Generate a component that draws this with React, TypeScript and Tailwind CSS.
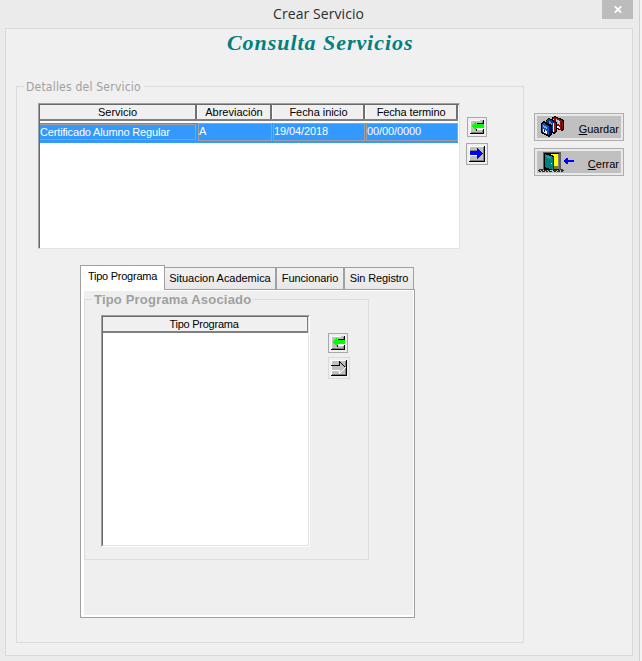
import React from "react";

type ArrowProps = { kind: "add" | "go" | "off" };

function ArrowIcon({ kind }: ArrowProps) {
  if (kind === "add") {
    return (
      <svg width="16" height="16" viewBox="0 0 16 16" shapeRendering="crispEdges">
        <path d="M1 1h13v13h-13z" fill="#c0c0c0" />
        <path d="M1 1h10v1h-10zM1 1h1v13h-1z" fill="#fff" />
        <path d="M8 4h7v6h-7z" fill="#efefef" />
        <path d="M14 1h1v3h-1zM8 4h7v1h-7zM14 10h1v5h-1zM1 14h14v1h-14zM7 10h1v2h-1z" fill="#000" />
        <path d="M2 13h12v1h-12zM13 2h1v2h-1zM13 11h1v2h-1z" fill="#808080" />
        <path d="M8 10h6v1h-6z" fill="#fff" />
        <path d="M2 7h1v-1h1v-1h1v-1h1v-1h1v2h8v4h-8v2h-1v-1h-1v-1h-1v-1h-1v-1h-1z" fill="#00ff00" />
      </svg>
    );
  }
  return (
    <svg width="16" height="16" viewBox="0 0 16 16" shapeRendering="crispEdges">
      <path d="M0 0h16v16h-16z" fill="#c0c0c0" />
      <path d="M0 0h15v1h-15zM0 0h1v15h-1z" fill="#fff" />
      <path d="M14 1h1v14h-1zM1 14h14v1h-14z" fill="#808080" />
      <path d="M15 0h1v16h-1zM0 15h16v1h-16z" fill="#000" />
      {kind === "go" ? (
        <>
          <path d="M1 4h7v1h-7z" fill="#808080" />
          <path
            d="M1 5h7v-3h1v1h1v1h1v1h1v1h1v1h1v1h-1v1h-1v1h-1v1h-1v1h-1v1h-1v-4h-7z"
            fill="#0000ff"
          />
          <path d="M1 9h7v1h-7z" fill="#fff" />
        </>
      ) : (
        <>
          <path d="M0 5h8v1h-8z" fill="#000" />
          <path
            d="M8 1h1v5h-1zM9 2h1v1h-1zM10 3h1v1h-1zM11 4h1v1h-1zM12 5h1v1h-1zM13 6h1v1h-1z"
            fill="#000"
          />
          <path
            d="M0 10h8v1h-8zM8 10h1v4h-1zM9 12h1v1h-1zM10 11h1v1h-1zM11 10h1v1h-1zM12 9h1v1h-1zM13 8h1v1h-1zM14 7h1v1h-1z"
            fill="#fff"
          />
        </>
      )}
    </svg>
  );
}

function DisksIcon() {
  return (
    <svg width="28" height="22" viewBox="0 0 28 22" shapeRendering="crispEdges">
      {/* back disk, dark red */}
      <path d="M15 1L18 0L27 4V13L25 15L15 11z" fill="#000" />
      <path d="M16 2L18 1L26 5V12L24 14L16 10z" fill="#8c1010" />
      <path d="M19 3L23 5V9L19 7z" fill="#c0c0c0" />
      <path d="M19 9L23 11V13L19 11z" fill="#fff" />
      <path d="M16 3h1v8h-1z" fill="#d0d0d0" />
      <path d="M24 6h1v7h-1z" fill="#400000" />
      {/* middle disk, blue with a dark red edge */}
      <path d="M9 4L12 2L20 6V15L17 18L9 14z" fill="#000" />
      <path d="M10 4L12 3L19 7V14L17 16L10 13z" fill="#103c90" />
      <path d="M12 5L15 7V10L12 8z" fill="#6090d8" />
      <path d="M9 5h1v6h-1z" fill="#a01818" />
      <path d="M16 7h1v9h-1z" fill="#e8e8e8" />
      <path d="M17 7h1v8h-1z" fill="#a01818" />
      {/* front disk, blue */}
      <path d="M4 7L7 5L15 9V18L12 21L4 17z" fill="#000" />
      <path d="M5 8L7 7L12 10V19L5 16z" fill="#1850a8" />
      <path d="M6 9L10 11V13L6 11z" fill="#70a8e8" />
      <path d="M6 13L10 15V18L6 16z" fill="#fff" />
      <path d="M7 14h1v2h-1z" fill="#000080" />
      <path d="M12 11L14 9V17L12 19z" fill="#001858" />
    </svg>
  );
}

function DoorIcon() {
  return (
    <svg width="38" height="22" viewBox="0 0 38 22" shapeRendering="crispEdges">
      <path d="M6 1h18v18h-18z" fill="#606060" />
      <path d="M7 2h15v17h-15z" fill="#000" />
      <path d="M14 3h7v12h-7z" fill="#ffff00" />
      <path d="M16 15h5v3h-5z" fill="#808000" />
      <path d="M21 3h1v15h-1z" fill="#808080" />
      <path d="M8 2L17 5V20L8 17z" fill="#000" />
      <path d="M8 3L16 6V19L8 16z" fill="#008080" />
      <path d="M9 4L14 6V8L9 6z" fill="#20a8a8" />
      <path d="M14 12h1v1h-1z" fill="#fff" />
      <path d="M16 6h1v13h-1z" fill="#004040" />
      <path
        d="M1 19h2v1h-2zM4 19h2v1h-2zM7 19h3v1h-3zM11 19h2v1h-2zM17 19h3v1h-3zM21 19h2v1h-2zM24 19h3v1h-3zM2 20h2v1h-2zM5 20h3v1h-3zM9 20h2v1h-2zM12 20h3v1h-3zM17 20h2v1h-2zM20 20h3v1h-3zM24 20h2v1h-2zM2 18h4v1h-4zM23 18h3v1h-3z"
        fill="#303030"
      />
      <path d="M26 10h1v-1h1v-1h1v-1h2v2h6v2h-6v2h-2v-1h-1v-1h-1v-1h-1z" fill="#0000ff" />
    </svg>
  );
}

function SmallButton({ kind }: ArrowProps) {
  if (kind === "add")
    return (
      <button className="flex h-5 w-5 items-center justify-center border border-[#a8a8a8] bg-[#efefef]">
        <ArrowIcon kind="add" />
      </button>
    );
  return (
    <button
      className={
        kind === "go"
          ? "flex h-[22px] w-[22px] items-center justify-center border border-[#a8a8a8] bg-[#efefef]"
          : "flex h-[22px] w-[22px] items-center justify-center border border-[#dadada] bg-[#efefef]"
      }
    >
      <ArrowIcon kind={kind} />
    </button>
  );
}

function ActionButton({ icon, letter, rest }: { icon: React.ReactNode; letter: string; rest: string }) {
  return (
    <button className="flex h-7 w-[90px] border border-[#adadad] bg-[#e9e9e9] p-0.5">
      <span className="flex h-[22px] w-full items-center justify-between bg-[#c0c0c0] pr-[2px]">
        <span className="w-[38px] shrink-0">{icon}</span>
        <span className="whitespace-nowrap pt-[4px] text-[11px] leading-[16px]">
          <span className="underline underline-offset-1">{letter}</span>
          {rest}
        </span>
      </span>
    </button>
  );
}

const columns = [
  { label: "Servicio", cls: "w-[157px]" },
  { label: "Abreviación", cls: "w-[75px] border-l border-l-white" },
  { label: "Fecha inicio", cls: "w-[93px] border-l border-l-white tracking-[-0.05px] pl-px" },
  { label: "Fecha termino", cls: "w-[93px] border-l border-l-white tracking-[-0.12px]" },
];

export default function App() {
  return (
    <div className="h-[661px] w-[642px] overflow-hidden bg-[#f3f3f3] font-['Liberation_Sans',Arial,sans-serif] text-[11px] text-black">
      <div className="h-[661px] w-[640px] border-r border-[#d0d0d0] bg-[#ebebeb]">
        <header className="flex h-7 justify-end">
          <h1 className="w-[329px] pt-[4px] font-['Open_Sans','Noto_Sans',sans-serif] text-[14px] leading-[20px] tracking-[0.08px] text-[#2b2b2b]">
            Crear Servicio
          </h1>
          <button className="mr-[6px] flex h-[19px] w-[31px] items-center justify-center bg-[#bcbcbc]">
            <svg width="8" height="7" viewBox="0 0 8 7">
              <path d="M0.8 0.3L7.2 6.7M7.2 0.3L0.8 6.7" stroke="#fff" strokeWidth="1.7" />
            </svg>
          </button>
        </header>

        <main className="ml-[5px] h-[628px] w-[628px] border border-[#d9d9d9] bg-[#f0f0f0]">
          <h2 className="h-[57px] pl-[221px] pt-px font-['Liberation_Serif',serif] text-[22px] leading-[26px] font-bold whitespace-nowrap text-[#008080] italic">
            <span className="tracking-[0.95px]">Consulta Servicios</span>
          </h2>

          <div className="flex pl-[10px]">
            <section className="h-[557px] w-[508px] border border-[#dcdcdc]">
              <div className="flow-root h-4">
                <span className="-mt-[8px] ml-[7px] block w-[120px] bg-[#f0f0f0] pl-[2px] font-['DejaVu_Sans_Condensed','DejaVu_Sans',sans-serif] text-[12px] leading-[16px] tracking-[0.22px] whitespace-nowrap text-[#a0a0a0]">
                  Detalles del Servicio
                </span>
              </div>

              <div className="flex pl-[21px]">
                <div className="h-[146px] w-[422px] border border-t-[#a0a0a0] border-r-[#e3e3e3] border-b-[#e3e3e3] border-l-[#a0a0a0] bg-white">
                  <div className="h-[144px] border-t border-l border-[#696969]">
                    <div className="flex h-4 w-[418px] border-b-2 border-b-[#808080] bg-[#f0f0f0]">
                      {columns.map((c) => (
                        <div
                          key={c.label}
                          className={`${c.cls} border-r-2 border-r-[#707070] text-center leading-[14px] whitespace-nowrap`}
                        >
                          {c.label}
                        </div>
                      ))}
                    </div>
                    <div className="mt-[2px] flex h-5 w-[418px] bg-[#3399ff] leading-[15px] whitespace-nowrap text-white">
                      <div className="mt-px h-4 w-[156px] border border-l-0 border-[#a0a0a0] tracking-[-0.16px]">
                        Certificado Alumno Regular
                      </div>
                      <div className="ml-[2px] h-[18px] w-[74px] border border-[#a0a0a0]">A</div>
                      <div className="ml-px h-[18px] w-[92px] border border-[#a0a0a0] tracking-[-0.1px]">19/04/2018</div>
                      <div className="ml-px h-[18px] w-[92px] border border-[#a0a0a0] tracking-[-0.1px]">00/00/0000</div>
                    </div>
                  </div>
                </div>
                <div className="ml-[6px] flex w-[22px] flex-col items-center gap-[6px] pt-[14px]">
                  <SmallButton kind="add" />
                  <SmallButton kind="go" />
                </div>
              </div>

              <div className="mt-[16px] ml-[63px] w-[335px]">
                <div className="flex h-6 items-end leading-[21px] whitespace-nowrap">
                  <div className="z-10 h-6 w-[85px] border border-b-0 border-[#a0a0a0] bg-white text-center tracking-[-0.25px]">
                    Tipo Programa
                  </div>
                  <div className="h-[22px] w-[111px] border border-b-0 border-l-0 border-[#a0a0a0] bg-gradient-to-b from-[#f2f2f2] to-[#e8e8e8] text-center tracking-[-0.04px]">
                    Situacion Academica
                  </div>
                  <div className="h-[22px] w-[68px] border border-b-0 border-[#a0a0a0] bg-gradient-to-b from-[#f2f2f2] to-[#e8e8e8] text-center tracking-[-0.1px]">
                    Funcionario
                  </div>
                  <div className="h-[22px] w-[70px] border border-b-0 border-[#a0a0a0] bg-gradient-to-b from-[#f2f2f2] to-[#e8e8e8] text-center tracking-[-0.1px]">
                    Sin Registro
                  </div>
                </div>
                <div className="flex h-px">
                  <div className="w-px bg-[#a0a0a0]" />
                  <div className="w-[83px] bg-white" />
                  <div className="grow bg-[#a0a0a0]" />
                </div>
                <div className="h-[328px] border border-t-0 border-[#a0a0a0] bg-white pt-px pr-px pb-[2px] pl-[3px]">
                  <div className="h-full bg-[#efefef] pt-[8px]">
                    <section className="h-[261px] w-[285px] border border-[#dcdcdc]">
                      <div className="flow-root h-[15px]">
                        <span className="-mt-[8px] ml-[7px] block w-[161px] bg-[#efefef] pl-[2px] text-[13px] leading-[16px] font-bold tracking-[0.19px] whitespace-nowrap text-[#a0a0a0]">
                          Tipo Programa Asociado
                        </span>
                      </div>
                      <div className="flex pl-[16px]">
                        <div className="h-[232px] w-[209px] border border-[#a0a0a0] border-r-white border-b-white bg-white">
                          <div className="h-[230px] border border-[#696969] border-r-[#e3e3e3] border-b-[#e3e3e3]">
                            <div className="h-4 border-r border-b-2 border-[#808080] bg-[#f0f0f0] pr-[2px] text-center leading-[14px] tracking-[-0.25px]">
                              Tipo Programa
                            </div>
                          </div>
                        </div>
                        <div className="ml-[18px] flex flex-col gap-1 pt-[18px]">
                          <SmallButton kind="add" />
                          <SmallButton kind="off" />
                        </div>
                      </div>
                    </section>
                  </div>
                </div>
              </div>
            </section>

            <aside className="ml-[10px] flex flex-col gap-[7px] pt-[27px]">
              <ActionButton icon={<DisksIcon />} letter="G" rest="uardar" />
              <ActionButton icon={<DoorIcon />} letter="C" rest="errar" />
            </aside>
          </div>
        </main>
      </div>
    </div>
  );
}
